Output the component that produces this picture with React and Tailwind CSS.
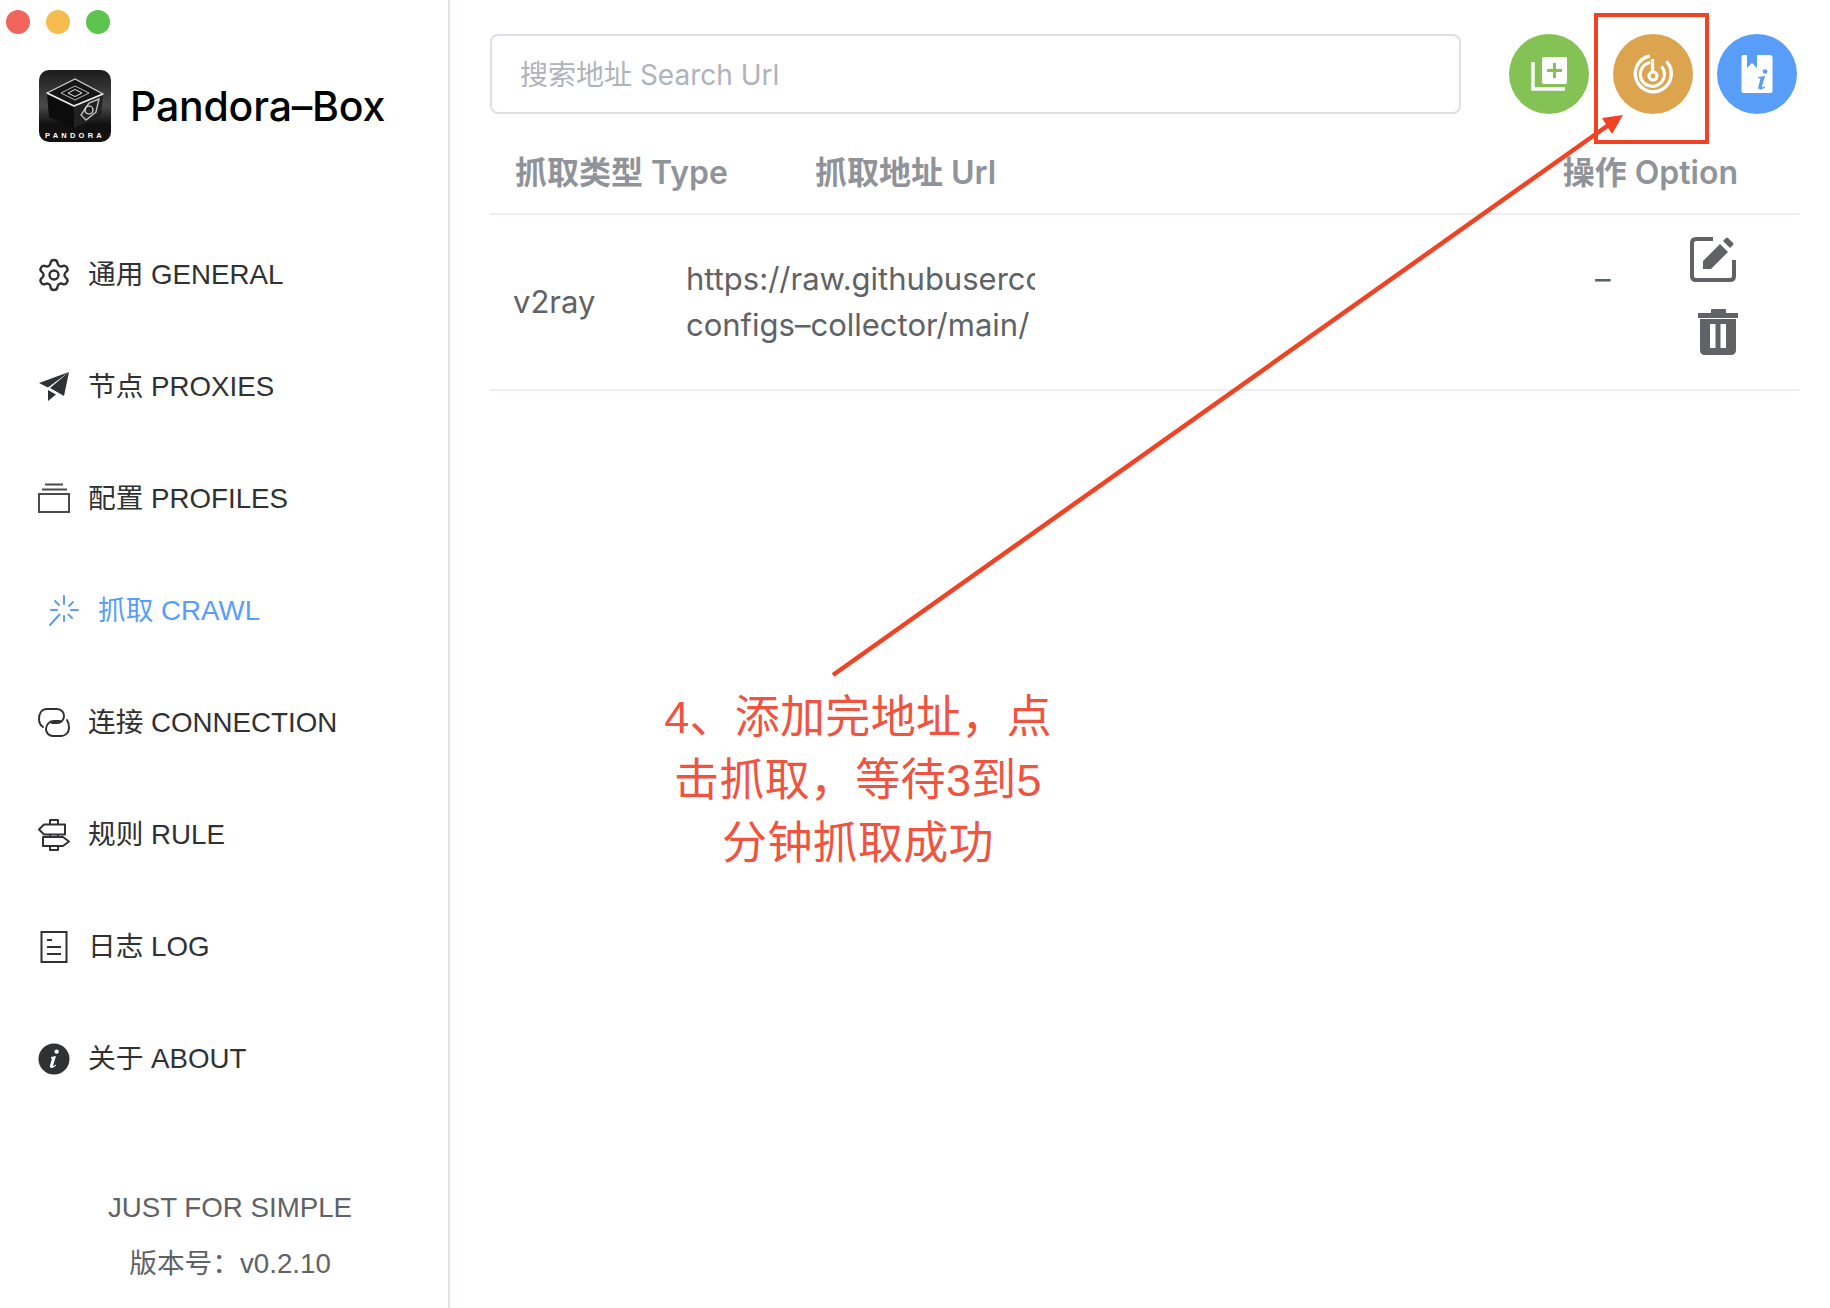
import { Settings } from "lucide-react";

const PlaneIcon = () => (
  <svg width="32" height="32" viewBox="0 0 32 32" className="text-[#303133]" fill="currentColor">
    <path d="M31 1 L1 12 L10 16.5 Z" />
    <path d="M31 1 L12 17 L26 25 Z" />
    <path d="M10 19 L10 30 L18 23.5 Z" />
  </svg>
);

const ProfilesIcon = () => (
  <svg width="32" height="32" viewBox="0 0 32 32" fill="none" stroke="#4a4a4a" strokeWidth="2">
    <rect x="1" y="11" width="30" height="18" />
    <path d="M7 1.5H25M4 6.5H29" />
  </svg>
);

const CrawlIcon = () => (
  <svg width="32" height="32" viewBox="0 0 32 32" fill="none" stroke="currentColor" strokeWidth="2" strokeLinecap="round">
    <path d="M16 1V9M16 21V26M21 11L25 7M23 15H30M20.5 19.5L24 23M11.5 19.5L2 30M9 15H3M11 10L7 6" />
  </svg>
);

const ConnectionIcon = () => (
  <svg width="32" height="32" viewBox="0 0 32 32" fill="none" stroke="#303133" strokeWidth="2" strokeLinecap="round">
    <path d="M5 20C2 18 1 15 1 12C1 6 4 2 9 2H19C24 2 26 6 26 9C26 13 23 16 19 16H14" />
    <path d="M29 13C31 16 31 19 31 21C31 26 27 29 23 29H15C11 29 8 26 8 22C8 17 12 14 16 14H22" />
  </svg>
);

const RuleIcon = () => (
  <svg width="32" height="32" viewBox="0 0 32 32" fill="none" stroke="#303133" strokeWidth="2" strokeLinejoin="round">
    <path d="M1 10.5L6 5.5H27V15.5H6Z" />
    <path d="M5 18H25L31 22.5L25 27H5Z" />
    <path d="M12 5.5V1H20V5.5M12 27V31H20V27M12 15.5V18M20 15.5V18" />
  </svg>
);

const LogIcon = () => (
  <svg width="32" height="32" viewBox="0 0 32 32" fill="none" stroke="#303133" strokeWidth="2">
    <rect x="3.5" y="1" width="25" height="30" />
    <path d="M9 9H14M9 16H23M9 23H23" />
  </svg>
);

const AboutIcon = () => (
  <svg width="32" height="32" viewBox="0 0 32 32">
    <circle cx="16" cy="16" r="15.5" fill="#303133" />
    <circle cx="18.6" cy="8.6" r="2.2" fill="#fff" />
    <path d="M13 14L18 13L15.2 22.2C15 23 15.6 23.2 16.2 22.8L17.8 21.6L18 22.6C16.6 24.2 15 25 13.6 25C12.2 25 11.6 24 12 22.6L14 15.6L13 15.4Z" fill="#fff" />
  </svg>
);

const navItems = [
  { icon: <Settings size={36} strokeWidth={1.6} className="-mx-0.5 text-[#303133]" />, label: "通用 GENERAL" },
  { icon: <PlaneIcon />, label: "节点 PROXIES" },
  { icon: <ProfilesIcon />, label: "配置 PROFILES" },
  { icon: <CrawlIcon />, label: "抓取 CRAWL", active: true },
  { icon: <ConnectionIcon />, label: "连接 CONNECTION" },
  { icon: <RuleIcon />, label: "规则 RULE" },
  { icon: <LogIcon />, label: "日志 LOG" },
  { icon: <AboutIcon />, label: "关于 ABOUT" },
];

const Logo = () => (
  <svg width="72" height="72" viewBox="0 0 72 72" className="shrink-0">
    <defs>
      <linearGradient id="logoBg" x1="0" y1="0" x2="0" y2="1">
        <stop offset="0" stopColor="#1c1c1c" />
        <stop offset="0.5" stopColor="#4a4a4a" />
        <stop offset="0.75" stopColor="#111" />
      </linearGradient>
    </defs>
    <rect width="72" height="72" rx="10" fill="url(#logoBg)" />
    <path d="M8 23L35 36V58L10 47Z" fill="#0c0c0c" />
    <path d="M35 36L64 24L62 46L35 58Z" fill="#222" />
    <path d="M8 23L36 9L64 24L35 36Z" fill="#151515" stroke="#cfcfcf" strokeWidth="1.2" />
    <path d="M22 23L36 16L50 23L36 30Z" fill="none" stroke="#bdbdbd" strokeWidth="1" />
    <path d="M29 23L36 19.5L43 23L36 26.5Z" fill="none" stroke="#e5e5e5" strokeWidth="1" />
    <path d="M8 23L35 36L64 24" fill="none" stroke="#e8e8e8" strokeWidth="1.4" />
    <path d="M42 45L50 33L60 29L57 42L47 50Z" fill="none" stroke="#bbb" strokeWidth="1.4" />
    <circle cx="50" cy="40" r="4" fill="none" stroke="#eee" strokeWidth="1.2" />
    <text x="36" y="68" textAnchor="middle" fill="#fff" fontSize="7.5" fontWeight="700" letterSpacing="3.2" fontFamily="'Liberation Sans', sans-serif">PANDORA</text>
  </svg>
);

const Sidebar = () => (
  <aside className="flex h-full w-[450px] shrink-0 flex-col border-r-2 border-[#dfe3ec] pt-[10px] font-['Liberation_Sans','Noto_Sans_CJK_SC',sans-serif]">
    {/* window controls */}
    <div className="flex gap-4 pl-[6px]">
      <span className="h-6 w-6 rounded-full bg-[#f0655c]" />
      <span className="h-6 w-6 rounded-full bg-[#f6bc4f]" />
      <span className="h-6 w-6 rounded-full bg-[#5cc44f]" />
    </div>

    <div className="mt-9 flex items-center gap-[19px] pl-[39px]">
      <Logo />
      <span className="font-['Inter','Noto_Sans_CJK_SC',sans-serif] text-[41px] font-medium leading-none tracking-[-0.2px] text-black">
        Pandora–Box
      </span>
    </div>

    <nav className="mt-[76px] flex flex-col">
      {navItems.map((item) => (
        <div
          key={item.label}
          className={`flex h-[112px] items-center gap-[18px] pt-px text-[27.7px] ${
            item.active ? "pl-[48px] text-[#589ef8]" : "pl-[38px] text-[#303133]"
          }`}
        >
          <span className="flex w-8 shrink-0 justify-center">{item.icon}</span>
          <span>{item.label}</span>
        </div>
      ))}
    </nav>

    <div className="mt-[66px] flex flex-col items-center pl-3 text-[27.7px] text-[#606266]">
      <div className="flex h-14 items-center">JUST FOR SIMPLE</div>
      <div className="flex h-14 items-center">版本号：v0.2.10</div>
    </div>
  </aside>
);

const RoundButton = ({ className, children }) => (
  <button type="button" className={`flex h-20 w-20 items-center justify-center rounded-full ${className}`}>
    {children}
  </button>
);

const AddIcon = () => (
  <svg width="36" height="36" viewBox="0 0 36 36" fill="none">
    <rect x="11" y="1" width="25" height="27" rx="2" fill="#fff" />
    <path d="M23.5 7V22M16 14.500H31" stroke="#85c255" strokeWidth="3" />
    <path d="M2 6V33H34" stroke="#fff" strokeWidth="3.4" />
  </svg>
);

const RadarIcon = () => (
  <svg width="44" height="44" viewBox="0 0 44 44" fill="none" stroke="#fff" strokeLinecap="butt">
    <path d="M19 4A18 18 0 1 0 35.500 9.500" strokeWidth="3.400" />
    <path d="M19 10.500A12 12 0 1 0 30.500 14.500" strokeWidth="3.200" />
    <path d="M21.500 7V21" strokeWidth="3.400" />
    <circle cx="22" cy="24" r="4" strokeWidth="3.200" />
  </svg>
);

const BookInfoIcon = () => (
  <svg width="32" height="40" viewBox="0 0 32 40">
    <path d="M2 1H6V14L11 9L16 14V1H29C30.500 1 31.500 2 31.500 3.500V37C31.500 38.500 30.500 39 29 39H3C1.500 39 0.500 38.500 0.500 37V3C0.500 2 1 1 2 1Z" fill="#fff" />
    <circle cx="24" cy="17.500" r="2.300" fill="#589ef8" />
    <path d="M17 23L24 22L21 32.500C20.800 33.500 21.500 33.500 22 33.200L23.500 32L24 33C22.500 35 20.500 35.500 19 35.500C17.500 35.500 17 34.500 17.300 33L19.500 24.500L17 24.200Z" fill="#589ef8" />
  </svg>
);

const EditIcon = () => (
  <svg width="46" height="46" viewBox="0 0 46 46" fill="none">
    <path d="M23 3H6C3.500 3 2 4.500 2 7V40C2 42.500 3.500 44 6 44H40C42.500 44 44 42.500 44 40V24" stroke="#606266" strokeWidth="4" />
    <path d="M13 33V25L30 8L38 16L21 33Z" fill="#606266" />
    <path d="M33 5L36 2C36.500 1.500 37.500 1.500 38 2L43 7C43.500 7.500 43.500 8.500 43 9L40 12Z" fill="#606266" />
  </svg>
);

const TrashIcon = () => (
  <svg width="40" height="46" viewBox="0 0 40 46">
    <path d="M0 4H13V1C13 0.500 13.500 0 14 0H27C27.500 0 28 0.500 28 1V4H40V9H0Z" fill="#606266" />
    <path d="M2 10H38V41C38 44 36 46 33 46H7C4 46 2 44 2 41ZM12 15V39H17.500V15ZM22.500 15V39H28V15Z" fill="#606266" fillRule="evenodd" />
  </svg>
);

const Main = () => (
  <main className="flex min-w-0 flex-1 flex-col pl-[40px] pr-[30px] pt-[34px] font-['Inter','Noto_Sans_CJK_SC',sans-serif]">
    <div className="flex items-center">
      <input
        type="text"
        placeholder="搜索地址 Search Url"
        className="h-20 w-[971px] rounded-lg border-2 border-[#dcdfe6] bg-white px-[28px] pt-[2px] text-[28px] outline-none placeholder:text-[#b0b3ba]"
      />
      <div className="ml-[48px] flex gap-6">
        <RoundButton className="bg-[#85c255]"><AddIcon /></RoundButton>
        <RoundButton className="bg-[#dca44f]"><RadarIcon /></RoundButton>
        <RoundButton className="bg-[#589ef8]"><BookInfoIcon /></RoundButton>
      </div>
    </div>

    <div className="mt-[19px] flex h-[82px] items-center border-b-2 border-[#ebeef5] pl-[25px] pr-[62px] text-[32px] font-semibold text-[#909399]">
      <span className="w-[300px]">抓取类型 Type</span>
      <span>抓取地址 Url</span>
      <span className="ml-auto">操作 Option</span>
    </div>

    <div className="flex h-[176px] items-center border-b-2 border-[#ebeef5] pl-[23px] text-[31px] text-[#606266]">
      <span className="w-[173px] shrink-0">v2ray</span>
      <div className="w-[349px] shrink-0 overflow-hidden whitespace-nowrap leading-[46px]">
        <div>https://raw.githubusercontent.com/</div>
        <div>configs–collector/main/</div>
      </div>
      <span className="ml-[560px] w-[95px] shrink-0 -translate-y-[23px]">–</span>
      <div className="flex flex-col gap-[27px] pb-[14px]">
        <EditIcon />
        <span className="ml-2"><TrashIcon /></span>
      </div>
    </div>
  </main>
);

// red annotation drawn over the screenshot
const Annotation = () => (
  <>
    <div className="absolute left-[1594px] top-[13px] h-[131px] w-[115px] border-[4px] border-[#f04324]" />
    <svg className="pointer-events-none absolute inset-0" width="1830" height="1308" fill="none">
      <path d="M833 675L1610 124" stroke="#f04324" strokeWidth="4.500" />
      <path d="M1623 115L1602 118L1612 134Z" fill="#f04324" />
    </svg>
    <div className="absolute left-[638px] top-[686px] w-[440px] text-center font-['Liberation_Sans','Noto_Sans_CJK_SC',sans-serif] text-[45px] leading-[63px] tracking-[0.3px] text-[#f05340]">
      4、添加完地址，点
      <br />
      击抓取，等待3到5
      <br />
      分钟抓取成功
    </div>
  </>
);

const App = () => (
  <div className="relative flex h-[1308px] w-[1830px] overflow-hidden bg-white">
    <Sidebar />
    <Main />
    <Annotation />
  </div>
);

export default App;
